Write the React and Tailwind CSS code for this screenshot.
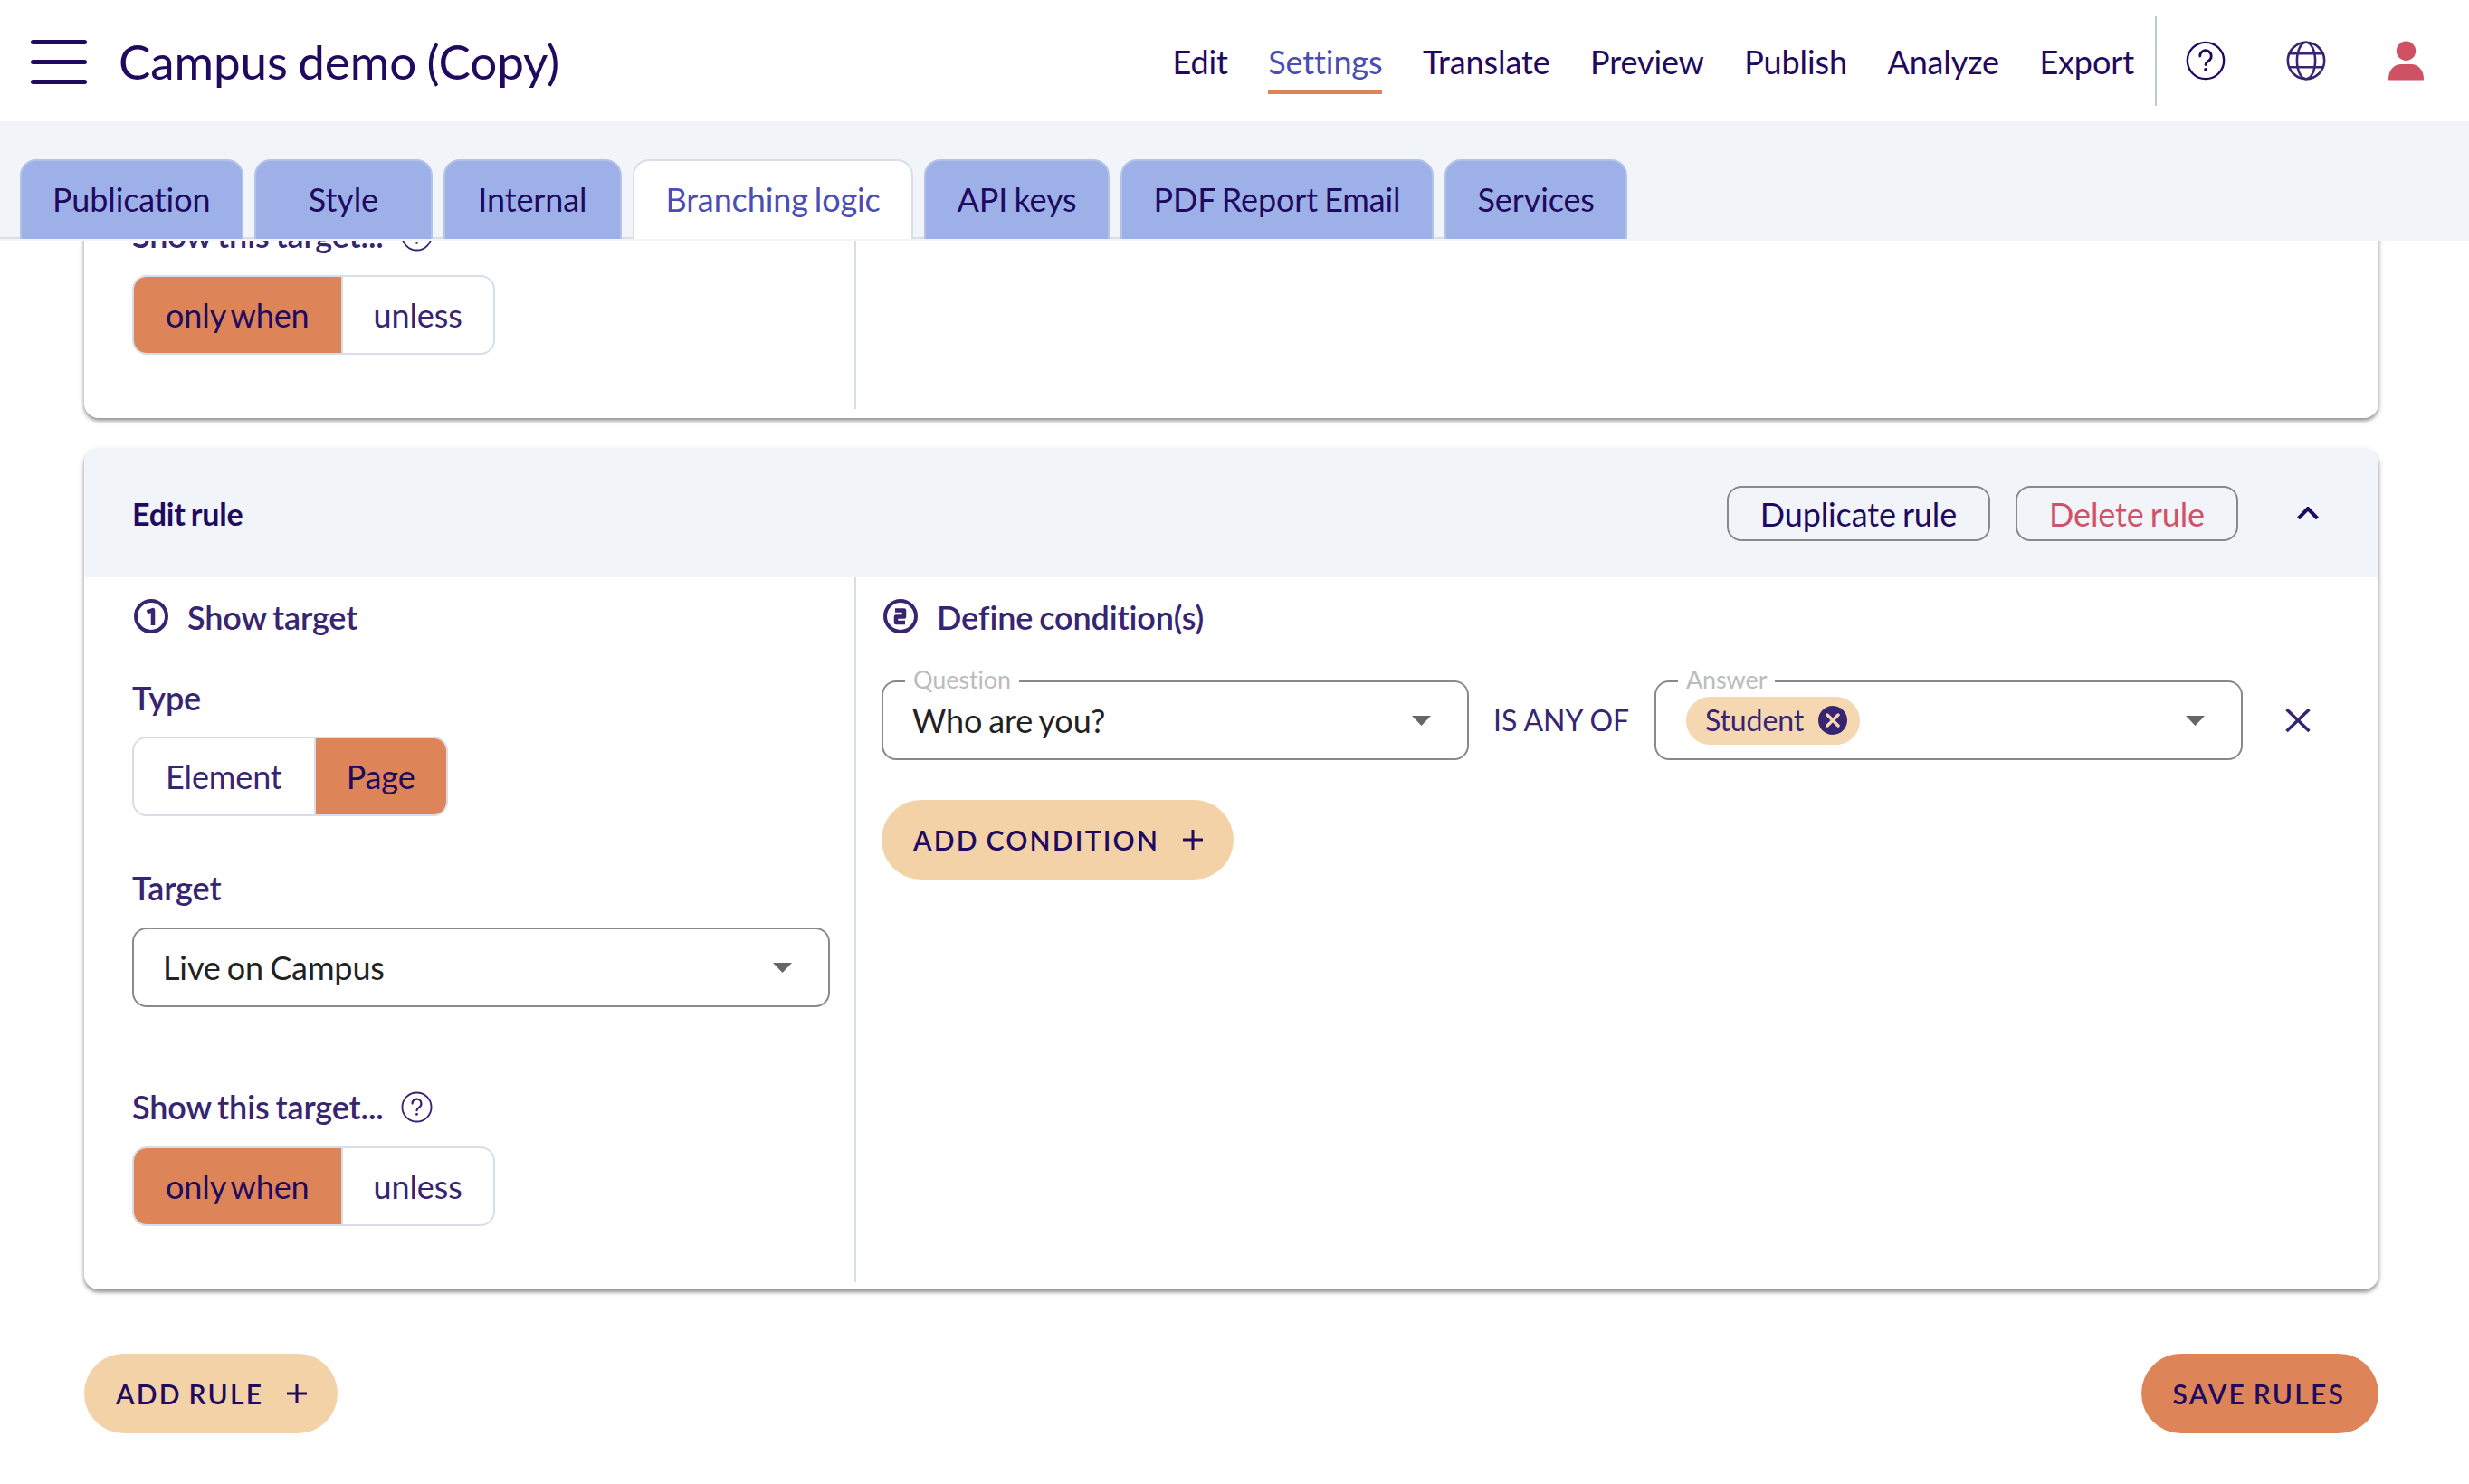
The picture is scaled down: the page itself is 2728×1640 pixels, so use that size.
import React from 'react';

const DARK = 'text-[#1f0a5f]';

const HelpIcon = ({ className }) => (
  <svg viewBox="0 0 24 24" fill="none" stroke="currentColor" strokeWidth="1.3" className={className}>
    <circle cx="12" cy="12" r="11" />
    <path d="M8.6 9.3a3.4 3.4 0 1 1 5.3 2.8c-1.2.8-1.9 1.3-1.9 2.4" strokeLinecap="round" strokeWidth="1.5" />
    <circle cx="12" cy="17.4" r="1" fill="currentColor" stroke="none" />
  </svg>
);

const GlobeIcon = ({ className }) => (
  <svg viewBox="0 0 24 24" fill="none" stroke="currentColor" strokeWidth="1.4" className={className}>
    <circle cx="12" cy="12" r="11" />
    <ellipse cx="12" cy="12" rx="5.5" ry="11" />
    <path d="M2 7.7h20M2 16h20" />
  </svg>
);

const PersonIcon = ({ className }) => (
  <svg viewBox="0 0 40 44" fill="currentColor" className={className}>
    <circle cx="20" cy="11" r="11" />
    <path d="M0 43c0-10 6-17 14-17h12c8 0 14 7 14 17 0 .6-.4 1-1 1H1c-.6 0-1-.4-1-1z" />
  </svg>
);

const StepIcon = ({ n }) => (
  <svg viewBox="0 0 38 38" fill="none" stroke="currentColor" strokeWidth="4" className="ml-[2px] h-[38px] w-[38px] shrink-0 text-[#372572]">
    <circle cx="19" cy="19" r="17" />
    {n === 1
      ? <path d="M14.5 14.5l6.5-2.5v17" strokeWidth="4.5" strokeLinejoin="round" />
      : <path d="M13 12.5h10v7h-9v6.5h10" strokeWidth="4.5" strokeLinejoin="round" />}
  </svg>
);

const Caret = ({ className = '' }) => (
  <svg viewBox="0 0 21 11" className={`h-[11px] w-[21px] fill-[#666666] ${className}`}>
    <path d="M0 0h21L10.5 11z" />
  </svg>
);

const Plus = () => (
  <svg viewBox="0 0 22 22" stroke="currentColor" strokeWidth="3" className="h-[22px] w-[22px]">
    <path d="M11 0v22M0 11h22" />
  </svg>
);

const Segmented = ({ items, active }) => (
  <div className="flex h-[88px] w-fit rounded-[16px] border-2 border-[#d7deea] bg-white text-[36px] text-[#372572] [word-spacing:-3px]">
    {items.map((label, i) => (
      <div
        key={label}
        className={`flex items-center ${i > 0 ? 'border-l-2 border-[#d7deea] px-[34px]' : 'px-[35px]'} ${
          i === active ? 'bg-[#de8459] text-[#1f0a5f]' : ''
        } ${i === 0 ? 'rounded-l-[14px]' : 'rounded-r-[14px]'}`}
      >
        {label}
      </div>
    ))}
  </div>
);

const ToggleBlock = () => (
  <>
    <div className="flex h-[40px] items-center gap-[19px] pb-[4px] text-[36px] font-semibold text-[#372572]">
      Show this target...
      <HelpIcon className="h-[35px] w-[35px]" />
    </div>
    <div className="mt-[22px]">
      <Segmented items={['only when', 'unless']} active={0} />
    </div>
  </>
);

const OutlinedSelect = ({ label, width, children }) => (
  <div className={`relative flex h-[88px] items-center justify-between rounded-[16px] border-2 border-[#878a8a] pl-[32px] pr-[40px] ${width}`}>
    {label && (
      <span className="absolute left-[24px] top-[-17px] bg-white px-[9px] text-[27px] leading-[28px] text-[#b9bdbd]">
        {label}
      </span>
    )}
    {children}
    <Caret />
  </div>
);

const PillButton = ({ children, className }) => (
  <button className={`flex h-[88px] items-center gap-[26px] rounded-full pl-[35px] pr-[34px] text-[30px] font-semibold tracking-[2.2px] [word-spacing:-2px] ${DARK} ${className}`}>
    {children}
  </button>
);

const SectionTitle = ({ n, children }) => (
  <div className="flex h-[38px] items-center gap-[21px] text-[36px] font-semibold text-[#372572]">
    <StepIcon n={n} />
    <span className="pt-[2px]">{children}</span>
  </div>
);

const FieldLabel = ({ children, className = '' }) => (
  <div className={`h-[40px] text-[36px] font-semibold leading-[36px] text-[#372572] ${className}`}>{children}</div>
);

const Card = ({ children, className = '' }) => (
  <div className={`overflow-hidden rounded-[16px] bg-white shadow-[0_3px_4px_rgba(0,0,0,0.4),0_1px_10px_rgba(0,0,0,0.08)] ${className}`}>
    {children}
  </div>
);

const tabs = ['Publication', 'Style', 'Internal', 'Branching logic', 'API keys', 'PDF Report Email', 'Services'];
const nav = ['Edit', 'Settings', 'Translate', 'Preview', 'Publish', 'Analyze', 'Export'];

export default function App() {
  return (
    <div className="flex h-[1640px] w-[2728px] flex-col overflow-hidden bg-white font-['Lato',sans-serif] tracking-[-0.12px] [word-spacing:-2px]">
      {/* top bar */}
      <header className={`flex h-[134px] shrink-0 items-start pl-[34px] pr-[50px] ${DARK}`}>
        <div className="mt-[44px] flex h-[49px] w-[62px] flex-col justify-between">
          <span className="h-[5px] rounded-full bg-[#1f0a5f]" />
          <span className="h-[5px] rounded-full bg-[#1f0a5f]" />
          <span className="h-[5px] rounded-full bg-[#1f0a5f]" />
        </div>
        <h1 className="ml-[35px] flex h-[134px] items-center pt-[2px] text-[53px]">Campus demo (Copy)</h1>
        <nav className="ml-auto flex gap-[44.5px] text-[36px]">
          {nav.map((item) => (
            <a
              key={item}
              className={`flex h-[104px] items-center border-b-4 pt-[35px] ${
                item === 'Settings' ? 'border-[#de8459] text-[#4a4db3]' : 'border-transparent'
              }`}
            >
              {item}
            </a>
          ))}
        </nav>
        <div className="ml-[23px] mt-[18px] h-[99px] w-[2px] bg-[#bccad6]" />
        <HelpIcon className="ml-[32px] mt-[45px] h-[44px] w-[44px]" />
        <GlobeIcon className="ml-[67px] mt-[45px] h-[44px] w-[44px] text-[#372572]" />
        <PersonIcon className="ml-[69px] mt-[45px] h-[44px] w-[39px] text-[#cf5164]" />
      </header>

      {/* settings tabs */}
      <div className="h-[132px] shrink-0 bg-[#f1f4f9] pt-[42px]">
        <div className="flex w-fit gap-[12px] border-b-2 border-[#d8dfe9] pl-[21.5px]">
          {tabs.map((tab) => (
            <div
              key={tab}
              className={`-mb-[2px] flex h-[88px] min-w-[197px] items-center justify-center rounded-t-[18px] border-2 border-b-0 px-[34.5px] pb-[3px] text-[36px] ${
                tab === 'Branching logic'
                  ? 'border-[#d8dfe9] bg-white text-[#4a4db3]'
                  : 'border-[#b4c2e6] bg-[#9eb0e8] text-[#1f0a5f]'
              }`}
            >
              {tab}
            </div>
          ))}
        </div>
      </div>

      {/* scrolled rule list */}
      <main className="min-h-0 flex-1 overflow-hidden pl-[93px] pr-[100px]">
        <Card className="-mt-[24px]">
          <div className="flex">
            <div className="w-[851px] pb-[70px] pl-[53px]">
              <ToggleBlock />
            </div>
            <div className="mb-[10px] w-[2px] bg-[#d7deea]" />
          </div>
        </Card>

        <Card className="mt-[34px]">
          <div className="flex h-[142px] items-center justify-between bg-[#f1f4f9] pl-[53px] pr-[66px]">
            <div className={`text-[34px] font-bold tracking-[-0.2px] ${DARK}`}>Edit rule</div>
            <div className="flex items-center">
              <button className={`flex h-[61px] items-center rounded-[16px] border-2 border-[#87898a] px-[35px] pt-[2px] text-[36px] [word-spacing:-2px] ${DARK}`}>
                Duplicate rule
              </button>
              <button className="ml-[28px] flex h-[61px] items-center rounded-[16px] border-2 border-[#87898a] px-[35px] pt-[2px] text-[36px] text-[#d0526a] [word-spacing:-2px]">
                Delete rule
              </button>
              <svg viewBox="0 0 24 14" fill="none" stroke="#1f0a5f" strokeWidth="4" className="ml-[65px] h-[14px] w-[24px]">
                <path d="M1.5 13L12 2l10.5 11" />
              </svg>
            </div>
          </div>

          <div className="flex h-[787px]">
            <div className="w-[851px] pl-[53px] pt-[24px]">
              <SectionTitle n={1}>Show target</SectionTitle>
              <FieldLabel className="mt-[53px]">Type</FieldLabel>
              <div className="mt-[21px]">
                <Segmented items={['Element', 'Page']} active={1} />
              </div>
              <FieldLabel className="mt-[61px]">Target</FieldLabel>
              <OutlinedSelect width="mt-[22px] w-[771px] text-[36px] text-[#222222]">Live on Campus</OutlinedSelect>
              <div className="mt-[92px]">
                <ToggleBlock />
              </div>
            </div>

            <div className="mb-[8px] w-[2px] bg-[#d7deea]" />

            <div className="pl-[28px] pt-[24px]">
              <SectionTitle n={2}>Define condition(s)</SectionTitle>
              <div className="mt-[52px] flex items-center">
                <OutlinedSelect label="Question" width="w-[649px] text-[36px] text-[#222222]">Who are you?</OutlinedSelect>
                <div className="ml-[27px] w-[178px] text-[32px] tracking-normal text-[#372572] [word-spacing:normal]">IS ANY OF</div>
                <OutlinedSelect label="Answer" width="w-[650px] !pl-[33px]">
                  <div className="flex h-[53px] items-center gap-[16px] rounded-full bg-[#f5d7b1] pl-[21px] pr-[14px] text-[32px] text-[#372572]">
                    Student
                    <span className="flex h-[32px] w-[32px] items-center justify-center rounded-full bg-[#372572]">
                      <svg viewBox="0 0 16 16" stroke="#f5d7b1" strokeWidth="3.5" strokeLinecap="round" className="h-[16px] w-[16px]">
                        <path d="M2 2l12 12M14 2L2 14" />
                      </svg>
                    </span>
                  </div>
                </OutlinedSelect>
                <svg viewBox="0 0 28 26" stroke="#372572" strokeWidth="3.5" className="ml-[47px] h-[26px] w-[28px]">
                  <path d="M1.5 1l25 24M26.5 1l-25 24" />
                </svg>
              </div>
              <PillButton className="mt-[44px] bg-[#f3d2a7]">
                ADD CONDITION
                <Plus />
              </PillButton>
            </div>
          </div>
        </Card>

        <div className="mt-[71px] flex justify-between">
          <PillButton className="bg-[#f3d2a7]">
            ADD RULE
            <Plus />
          </PillButton>
          <PillButton className="bg-[#de8459] !pr-[37px]">SAVE RULES</PillButton>
        </div>
      </main>
    </div>
  );
}
